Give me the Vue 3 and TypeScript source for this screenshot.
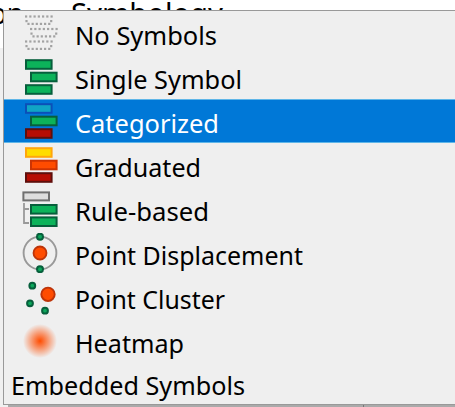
<script setup lang="ts">
import { ref } from 'vue'

type Kind = 'none' | 'bars' | 'rules' | 'displacement' | 'cluster' | 'heatmap'
interface Item {
  label: string
  kind: Kind
  width: number
  bars?: [string, string][]
}

const green: [string, string] = ['#0cb35a', '#075f3c']
const red: [string, string] = ['#b70d03', '#5f0f0c']

const items: Item[] = [
  { label: 'No Symbols', kind: 'none', width: 142 },
  { label: 'Single Symbol', kind: 'bars', width: 167, bars: [green, green, green] },
  { label: 'Categorized', kind: 'bars', width: 144, bars: [['#10a5c5', '#0b50b8'], green, red] },
  { label: 'Graduated', kind: 'bars', width: 126, bars: [['#ffdc00', '#ffa60c'], ['#ff4c00', '#cc3404'], red] },
  { label: 'Rule-based', kind: 'rules', width: 134 },
  { label: 'Point Displacement', kind: 'displacement', width: 228 },
  { label: 'Point Cluster', kind: 'cluster', width: 150 },
  { label: 'Heatmap', kind: 'heatmap', width: 109 },
]
const selected = ref(2)

// Dotted outlines: seven dots on top, one at each side, six below.
const dots: [number, number][] = []
for (const [ox, oy] of [[3, 2.4], [8, 14.9], [3, 27.4]]) {
  for (let i = 0; i < 7; i++) dots.push([ox + i * 4.25, oy])
  dots.push([ox + 0.4, oy + 4.6], [ox + 25.1, oy + 4.6])
  for (let i = 0; i < 6; i++) dots.push([ox + 2.4 + i * 4.15, oy + 7.4])
}
</script>

<template>
  <main class="screen">
    <svg class="backdrop" width="455" height="48">
      <text x="-9.5" y="24" textLength="33" lengthAdjust="spacingAndGlyphs">on</text>
      <text x="71" y="24" textLength="152" lengthAdjust="spacingAndGlyphs">Symbology</text>
    </svg>
    <ul class="menu">
      <li v-for="(item, i) in items" :key="item.label" class="item" :class="{ selected: i === selected }" @click="selected = i">
        <svg class="icon" viewBox="0 0 36 40" aria-hidden="true">
          <g v-if="item.kind === 'none'" fill="#a2a2a2">
            <rect v-for="(d, n) in dots" :key="n" :x="d[0]" :y="d[1]" width="2.2" height="2.2" />
          </g>
          <g v-else-if="item.kind === 'bars'" stroke-width="2">
            <rect v-for="(b, n) in item.bars" :key="n" :x="n === 1 ? 9 : 4" :y="3.2 + n * 12.5" width="25.6" height="8.6" :fill="b[0]" :stroke="b[1]" />
          </g>
          <g v-else-if="item.kind === 'rules'" stroke-width="2">
            <rect x="1.4" y="3.4" width="25.6" height="8" fill="#dedede" stroke="#707070" />
            <path d="M2 14v20h5M2 20h5" fill="none" stroke="#999" stroke-width="1.8" />
            <rect x="9" y="16" width="25.6" height="8.6" :fill="green[0]" :stroke="green[1]" />
            <rect x="9" y="28.4" width="25.6" height="8.6" :fill="green[0]" :stroke="green[1]" />
          </g>
          <g v-else-if="item.kind === 'displacement'">
            <circle cx="18" cy="20" r="16.4" fill="none" stroke="#999" stroke-width="1.9" />
            <circle cx="18" cy="20" r="6.5" fill="#ff4c00" stroke="#bd3409" stroke-width="1.8" />
            <circle v-for="y in [3.7, 36.2]" :key="y" cx="18" :cy="y" r="3" fill="#0ca75a" stroke="#075f3c" stroke-width="2" />
          </g>
          <g v-else-if="item.kind === 'cluster'">
            <circle v-for="p in [[10.3, 8.7], [8, 26.3], [23, 33.7]]" :key="p[0]" :cx="p[0]" :cy="p[1]" r="2.9" fill="#0ca75a" stroke="#075f3c" stroke-width="2" />
            <circle cx="26" cy="17.3" r="6.7" fill="#ff4c00" stroke="#bd3409" stroke-width="1.9" />
          </g>
          <g v-else>
            <defs>
              <radialGradient id="heat">
                <stop offset="0" stop-color="#ff4c00" />
                <stop offset=".3" stop-color="#ff4c00" stop-opacity=".7" />
                <stop offset="1" stop-color="#ff4c00" stop-opacity="0" />
              </radialGradient>
            </defs>
            <circle cx="18" cy="20" r="17" fill="url(#heat)" />
          </g>
        </svg>
        <svg class="label" width="300" height="44"><text x="0" y="34" :textLength="item.width" lengthAdjust="spacingAndGlyphs">{{ item.label }}</text></svg>
      </li>
      <li class="item plain"><svg class="label" width="300" height="41"><text x="0" y="32" textLength="234" lengthAdjust="spacingAndGlyphs">Embedded Symbols</text></svg></li>
    </ul>
    <footer class="shadow"><span class="divider"></span></footer>
  </main>
</template>

<style>
body { overflow: hidden; }
</style>

<style scoped>
.screen {
  position: relative;
  width: 455px;
  height: 407px;
  overflow: hidden;
  background: linear-gradient(#fff 48px, #f0f0f0 48px);
  font-family: "Noto Sans", "Open Sans", sans-serif;
  font-size: 26px;
  color: #000;
}
.backdrop {
  display: block;
  font-size: 28.5px;
}
.menu {
  position: absolute;
  top: 10px;
  left: 3px;
  width: 460px;
  height: 395px;
  box-sizing: border-box;
  margin: 0;
  padding: 0;
  border: 1px solid #999;
  background: #efefef;
  list-style: none;
}
.item {
  display: flex;
  height: 44px;
  box-sizing: border-box;
  padding-left: 18px;
}
.selected {
  background: #0078d7;
  box-shadow: inset 0 1px #5fb6e8, inset 0 -1px #5fb6e8;
  color: #fff;
}
.icon { width: 36px; height: 40px; margin-top: 2px; flex: none; }
.label { margin-left: 17px; overflow: visible; fill: currentColor; flex: none; }
.plain { height: 41px; padding: 0; }
.plain .label { margin-left: 7px; }
.shadow {
  position: absolute;
  left: 8px;
  right: 0;
  bottom: 0;
  height: 2px;
  background: #aaa;
}
.divider { display: block; width: 1px; height: 2px; margin-left: 355px; background: #777; }
</style>
